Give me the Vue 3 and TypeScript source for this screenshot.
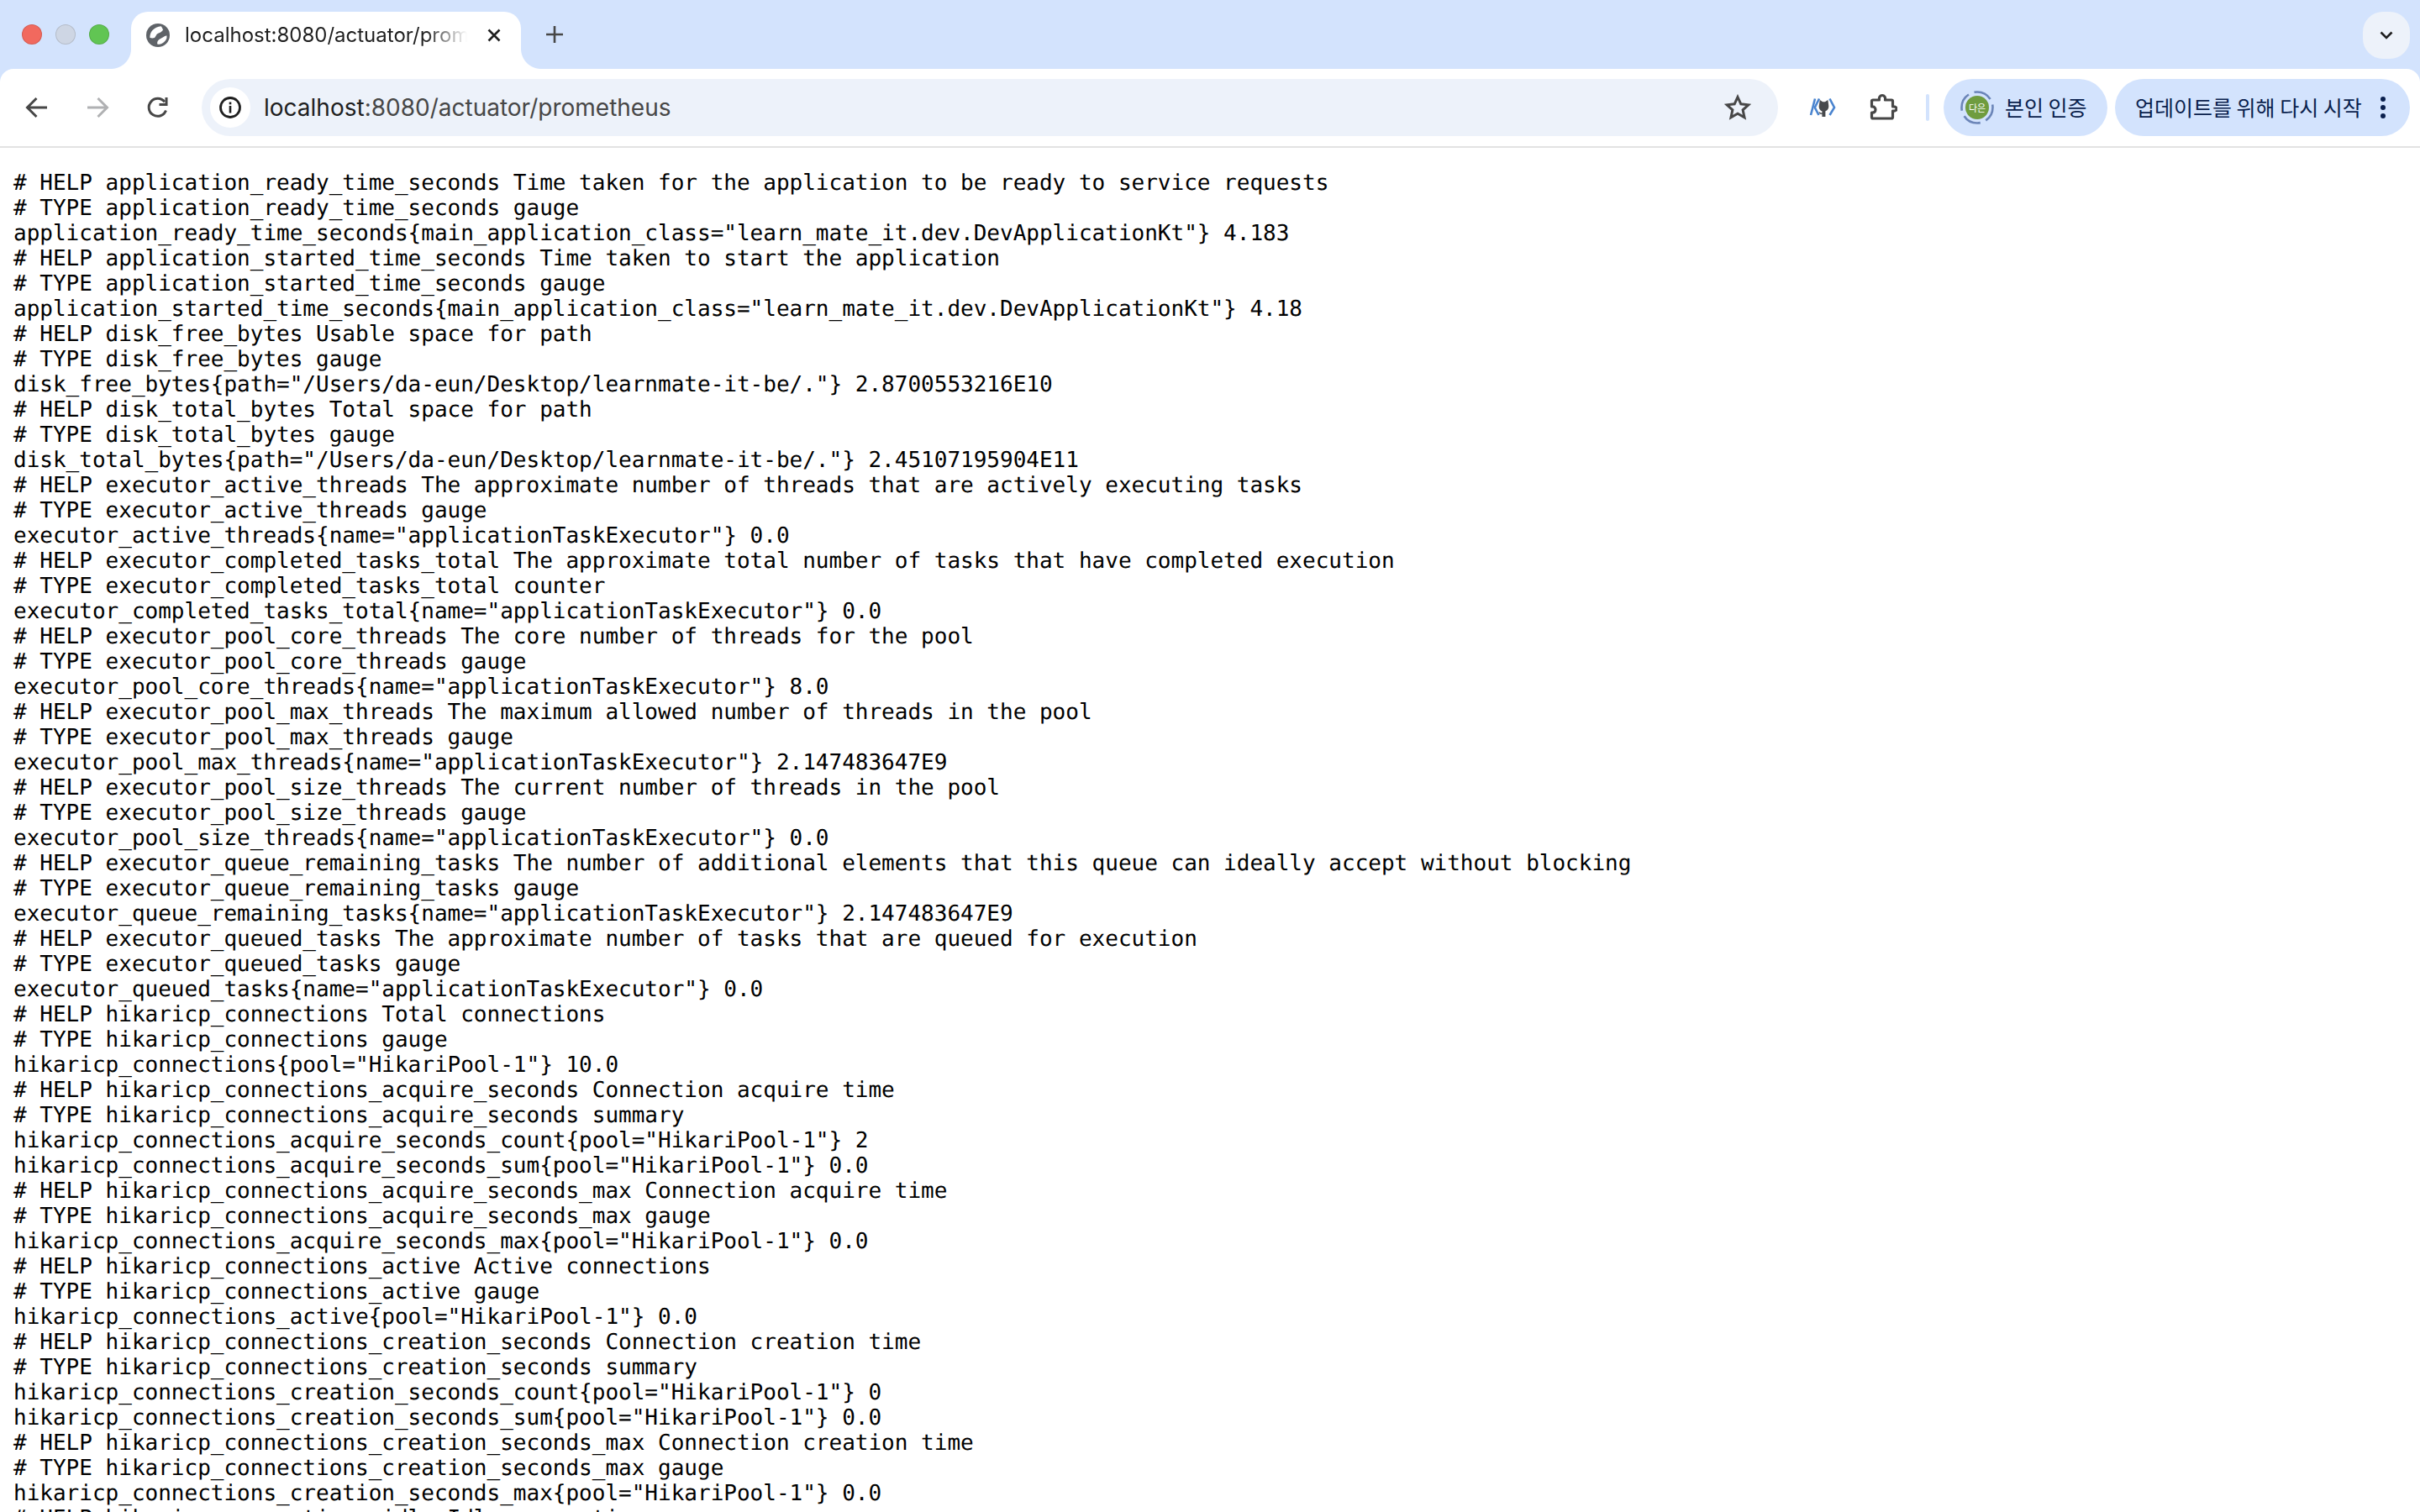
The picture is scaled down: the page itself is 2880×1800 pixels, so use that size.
<script setup lang="ts">
const metrics: string = `# HELP application_ready_time_seconds Time taken for the application to be ready to service requests
# TYPE application_ready_time_seconds gauge
application_ready_time_seconds{main_application_class="learn_mate_it.dev.DevApplicationKt"} 4.183
# HELP application_started_time_seconds Time taken to start the application
# TYPE application_started_time_seconds gauge
application_started_time_seconds{main_application_class="learn_mate_it.dev.DevApplicationKt"} 4.18
# HELP disk_free_bytes Usable space for path
# TYPE disk_free_bytes gauge
disk_free_bytes{path="/Users/da-eun/Desktop/learnmate-it-be/."} 2.8700553216E10
# HELP disk_total_bytes Total space for path
# TYPE disk_total_bytes gauge
disk_total_bytes{path="/Users/da-eun/Desktop/learnmate-it-be/."} 2.45107195904E11
# HELP executor_active_threads The approximate number of threads that are actively executing tasks
# TYPE executor_active_threads gauge
executor_active_threads{name="applicationTaskExecutor"} 0.0
# HELP executor_completed_tasks_total The approximate total number of tasks that have completed execution
# TYPE executor_completed_tasks_total counter
executor_completed_tasks_total{name="applicationTaskExecutor"} 0.0
# HELP executor_pool_core_threads The core number of threads for the pool
# TYPE executor_pool_core_threads gauge
executor_pool_core_threads{name="applicationTaskExecutor"} 8.0
# HELP executor_pool_max_threads The maximum allowed number of threads in the pool
# TYPE executor_pool_max_threads gauge
executor_pool_max_threads{name="applicationTaskExecutor"} 2.147483647E9
# HELP executor_pool_size_threads The current number of threads in the pool
# TYPE executor_pool_size_threads gauge
executor_pool_size_threads{name="applicationTaskExecutor"} 0.0
# HELP executor_queue_remaining_tasks The number of additional elements that this queue can ideally accept without blocking
# TYPE executor_queue_remaining_tasks gauge
executor_queue_remaining_tasks{name="applicationTaskExecutor"} 2.147483647E9
# HELP executor_queued_tasks The approximate number of tasks that are queued for execution
# TYPE executor_queued_tasks gauge
executor_queued_tasks{name="applicationTaskExecutor"} 0.0
# HELP hikaricp_connections Total connections
# TYPE hikaricp_connections gauge
hikaricp_connections{pool="HikariPool-1"} 10.0
# HELP hikaricp_connections_acquire_seconds Connection acquire time
# TYPE hikaricp_connections_acquire_seconds summary
hikaricp_connections_acquire_seconds_count{pool="HikariPool-1"} 2
hikaricp_connections_acquire_seconds_sum{pool="HikariPool-1"} 0.0
# HELP hikaricp_connections_acquire_seconds_max Connection acquire time
# TYPE hikaricp_connections_acquire_seconds_max gauge
hikaricp_connections_acquire_seconds_max{pool="HikariPool-1"} 0.0
# HELP hikaricp_connections_active Active connections
# TYPE hikaricp_connections_active gauge
hikaricp_connections_active{pool="HikariPool-1"} 0.0
# HELP hikaricp_connections_creation_seconds Connection creation time
# TYPE hikaricp_connections_creation_seconds summary
hikaricp_connections_creation_seconds_count{pool="HikariPool-1"} 0
hikaricp_connections_creation_seconds_sum{pool="HikariPool-1"} 0.0
# HELP hikaricp_connections_creation_seconds_max Connection creation time
# TYPE hikaricp_connections_creation_seconds_max gauge
hikaricp_connections_creation_seconds_max{pool="HikariPool-1"} 0.0
# HELP hikaricp_connections_idle Idle connections`
</script>

<template>
  <div class="window">
    <header class="strip">
      <div class="lights">
        <span class="light red"></span>
        <span class="light gray"></span>
        <span class="light green"></span>
      </div>
      <div class="tab">
        <svg class="globe" viewBox="0 0 28 28">
          <circle cx="14" cy="14" r="14" fill="#5f6368" />
          <path d="M4.300 16.500C4.500 13 5.500 10 7.500 8c2.600-2.600 6-4.200 10.200-4.700 1 1.400 2 3 2.300 4.400-1.200 1.600-2.600 2.800-4 3.300-1.400.5-2.600 1-3.300 1.700-.8 1-1.400 2.600-2.700 4.300-1.800.6-4 .6-5.700-.2z" fill="#fff" />
          <path d="M13.300 24.500c-.4-1.700.1-3.400 1-4.500 1.400-1.400 3.200-2.300 5-3.300 1.600-.9 3.300-1.800 5-2.400.3 1.100.3 2.300 0 3.400-.7 1.800-1.900 3.300-3.300 4.500-1.400 1.200-3 1.900-4.300 2.300-1.200.3-2.300.4-3.400 0z" fill="#fff" />
        </svg>
        <span class="tab-title">localhost:8080/actuator/prometheus</span>
        <svg class="tab-x" viewBox="0 0 16 16">
          <path d="M1.500 1.500l13 13M14.500 1.500l-13 13" stroke="#1f1f1f" stroke-width="2.600" fill="none" />
        </svg>
      </div>
      <svg class="plus" viewBox="0 0 20 20">
        <path d="M10 0v20M0 10h20" stroke="#474747" stroke-width="2.600" fill="none" />
      </svg>
      <div class="tab-menu">
        <svg viewBox="0 0 16 10" class="chev">
          <path d="M1.500 1.500L8 8l6.500-6.500" stroke="#1f1f1f" stroke-width="2.600" fill="none" />
        </svg>
      </div>
    </header>

    <nav class="toolbar">
      <svg class="nav-icon" viewBox="0 0 28 28">
        <path d="M26 14H3M13.500 3L2.500 14l11 11" stroke="#474747" stroke-width="3" fill="none" />
      </svg>
      <svg class="nav-icon forward" viewBox="0 0 28 28">
        <path d="M2 14h23M14.500 3l11 11-11 11" stroke="#b0b1b3" stroke-width="3" fill="none" />
      </svg>
      <svg class="nav-icon reload" viewBox="0 0 28 28">
        <path d="M23.500 17.500a10.500 10.500 0 1 1-1.600-10.200" stroke="#474747" stroke-width="3" fill="none" />
        <path d="M24 2v8.500h-8.500" stroke="#474747" stroke-width="3" fill="none" />
      </svg>

      <div class="omnibox">
        <span class="info-chip">
          <svg viewBox="0 0 28 28" class="info">
            <circle cx="14" cy="14" r="11.500" stroke="#1f1f1f" stroke-width="2.800" fill="none" />
            <rect x="12.700" y="12" width="2.600" height="8.500" fill="#1f1f1f" />
            <rect x="12.700" y="7.500" width="2.600" height="2.800" fill="#1f1f1f" />
          </svg>
        </span>
        <span class="url"><span class="host">localhost</span>:8080/actuator/prometheus</span>
        <svg class="star" viewBox="0 0 32 32">
          <path d="M16 3.500l3.800 8.300 9 1-6.700 6.100 1.900 8.900L16 23.300l-8 4.500 1.900-8.900-6.700-6.100 9-1z" stroke="#474747" stroke-width="3" fill="none" stroke-linejoin="miter" />
        </svg>
      </div>

      <svg class="ext-kube" viewBox="0 0 40 40">
        <path d="M10 9.500L5 29" stroke="#4a84cf" stroke-width="2.600" fill="none" />
        <path d="M15 9.500L9.800 20l4.700 9" stroke="#4a84cf" stroke-width="2.600" fill="none" />
        <path d="M27.500 9.500L33 20l-5.500 9" stroke="#4a84cf" stroke-width="2.600" fill="none" />
        <path d="M15.800 11l3.400 2.200h2.800L25.400 11l.8 6.200c.6 4.100-1.700 6.500-3.800 7.100V31h-4v-3.200c-2 .4-3.200-.4-4-2l1.500-.4c.6 1 1.300 1.200 2.500 1v-2.100c-2.300-.7-4.200-3.200-3.600-7.100z" fill="#484a4d" />
      </svg>
      <svg class="ext-puzzle" viewBox="0 0 34 34">
        <path d="M5 8h7.500c-.6-3 1-5.500 3.500-5.500s4.100 2.500 3.500 5.500H27c1 0 1.500.5 1.500 1.500v6.500c3-.6 4.500 1 4.500 2.500s-1.500 3.100-4.500 2.500v7.500c0 1-.5 1.500-1.500 1.500H5c-1 0-1.500-.5-1.500-1.500v-5.500c3 .6 4.500-1.500 4.500-3.500s-1.500-4-4.500-3.500V9.500C3.500 8.500 4 8 5 8z" stroke="#474747" stroke-width="3.200" fill="none" stroke-linejoin="round" />
      </svg>
      <span class="divider"></span>

      <div class="pill profile">
        <span class="avatar-wrap">
          <svg class="ring" viewBox="0 0 40 40">
            <circle cx="20" cy="20" r="18.500" stroke="#6b85b8" stroke-width="2.600" fill="none" stroke-dasharray="22 7" stroke-dashoffset="4" />
          </svg>
          <span class="avatar">다은</span>
        </span>
        <span class="pill-text">본인 인증</span>
      </div>
      <div class="pill update">
        <span class="pill-text">업데이트를 위해 다시 시작</span>
        <span class="dots"><i></i><i></i><i></i></span>
      </div>
    </nav>

    <main class="page">
      <pre class="metrics">{{ metrics }}</pre>
    </main>
  </div>
</template>

<style scoped>
.window {
  width: 2880px;
  height: 1800px;
  overflow: hidden;
  background: #d3e3fd;
  display: flex;
  flex-direction: column;
}
.strip {
  height: 82px;
  flex: none;
  display: flex;
  align-items: flex-start;
  font-family: Inter, "Liberation Sans", sans-serif;
}
.lights {
  display: flex;
  gap: 16px;
  padding: 29px 0 0 26px;
  width: 156px;
  box-sizing: border-box;
}
.light {
  width: 24px;
  height: 24px;
  border-radius: 50%;
  box-sizing: border-box;
  border: 1px solid rgba(0, 0, 0, 0.12);
}
.red { background: #f1695e; }
.gray { background: #ced6e4; }
.green { background: #61c553; }
.tab {
  position: relative;
  margin-top: 14px;
  width: 464px;
  height: 68px;
  background: #fff;
  border-radius: 20px 20px 0 0;
  display: flex;
  align-items: center;
  padding: 0 0 12px 18px;
  box-sizing: border-box;
}
.tab::before,
.tab::after {
  content: "";
  position: absolute;
  bottom: 0;
  width: 24px;
  height: 24px;
}
.tab::before {
  left: -24px;
  background: radial-gradient(circle at 0 0, #d3e3fd 23.500px, #fff 24.500px);
}
.tab::after {
  right: -24px;
  background: radial-gradient(circle at 100% 0, #d3e3fd 23.500px, #fff 24.500px);
}
.globe {
  width: 28px;
  height: 28px;
  flex: none;
}
.tab-title {
  margin-left: 18px;
  padding-bottom: 2px;
  width: 336px;
  flex: none;
  overflow: hidden;
  white-space: nowrap;
  font-size: 24px;
  color: #1f1f1f;
  -webkit-mask-image: linear-gradient(to right, #000 85%, transparent 100%);
  mask-image: linear-gradient(to right, #000 85%, transparent 100%);
}
.tab-x {
  width: 16px;
  height: 16px;
  margin-left: 24px;
  flex: none;
}
.plus {
  width: 20px;
  height: 20px;
  margin: 31px 0 0 30px;
  flex: none;
}
.tab-menu {
  margin: 14px 12px 0 auto;
  width: 56px;
  height: 56px;
  border-radius: 24px;
  background: #edf2fa;
  display: flex;
  align-items: center;
  justify-content: center;
}
.chev {
  width: 16px;
  height: 10px;
}
.toolbar {
  height: 94px;
  flex: none;
  box-sizing: border-box;
  background: #fff;
  border-radius: 16px 16px 0 0;
  border-bottom: 2px solid #e2e2e2;
  display: flex;
  align-items: center;
  padding: 0 12px 0 30px;
  font-family: Inter, "Liberation Sans", sans-serif;
}
.nav-icon {
  width: 28px;
  height: 28px;
  flex: none;
}
.forward { margin-left: 44px; }
.reload { margin-left: 44px; }
.omnibox {
  margin-left: 38px;
  width: 1876px;
  height: 68px;
  flex: none;
  box-sizing: border-box;
  background: #edf2fa;
  border-radius: 34px;
  display: flex;
  align-items: center;
  padding: 0 32px 0 10px;
}
.info-chip {
  width: 48px;
  height: 48px;
  border-radius: 50%;
  background: #fff;
  display: flex;
  align-items: center;
  justify-content: center;
  flex: none;
}
.info {
  width: 28px;
  height: 28px;
}
.url {
  margin-left: 16px;
  font-size: 28px;
  color: #474747;
  white-space: nowrap;
}
.host { color: #1f1f1f; }
.star {
  width: 32px;
  height: 32px;
  margin-left: auto;
  flex: none;
}
.ext-kube {
  width: 40px;
  height: 40px;
  margin-left: 34px;
  flex: none;
}
.ext-puzzle {
  width: 34px;
  height: 34px;
  margin-left: 34px;
  flex: none;
}
.divider {
  width: 4px;
  height: 32px;
  margin-left: 34px;
  border-radius: 2px;
  background: #d3e3fd;
  flex: none;
}
.pill {
  height: 68px;
  flex: none;
  box-sizing: border-box;
  border-radius: 34px;
  background: #d3e3fd;
  display: flex;
  align-items: center;
}
.pill-text {
  font-family: "Noto Sans CJK KR", sans-serif;
  font-size: 25px;
  line-height: 34px;
  padding-bottom: 2px;
  color: #0a1f4d;
  white-space: nowrap;
}
.profile {
  margin-left: 17px;
  width: 195px;
  padding-left: 20px;
}
.avatar-wrap {
  position: relative;
  width: 40px;
  height: 40px;
  flex: none;
  display: flex;
  align-items: center;
  justify-content: center;
  margin-right: 13px;
}
.ring {
  position: absolute;
  inset: 0;
  width: 40px;
  height: 40px;
}
.avatar {
  width: 28px;
  height: 28px;
  border-radius: 50%;
  background: #6f9c3f;
  color: #fff;
  font-family: "Noto Sans CJK KR", sans-serif;
  font-size: 11px;
  line-height: 28px;
  text-align: center;
  white-space: nowrap;
}
.update {
  margin-left: 9px;
  width: 351px;
  padding-left: 24px;
}
.dots {
  display: flex;
  flex-direction: column;
  gap: 4px;
  margin-left: 22px;
}
.dots i {
  display: block;
  width: 6px;
  height: 6px;
  border-radius: 50%;
  background: #0a1f4d;
}
.page {
  flex: 1;
  min-height: 0;
  overflow: hidden;
  background: #fff;
  padding: 27px 0 0 16px;
}
.metrics {
  margin: 0;
  font-family: "DejaVu Sans Mono", monospace;
  font-size: 26px;
  line-height: 30px;
  color: #000;
  text-rendering: geometricPrecision;
}
</style>
